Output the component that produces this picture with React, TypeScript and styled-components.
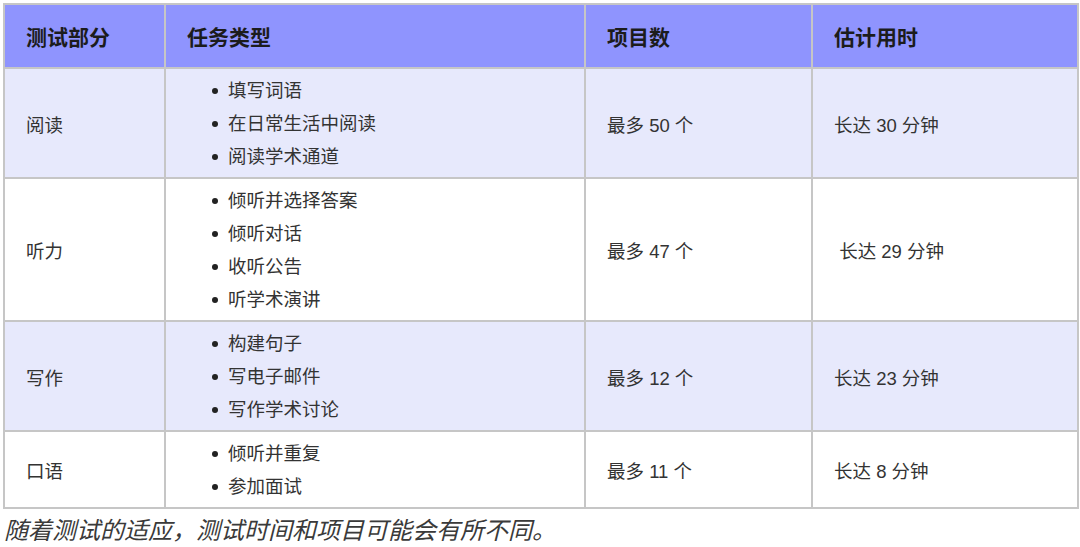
import { FC } from "react";
import styled, { createGlobalStyle } from "styled-components";

const GlobalStyle = createGlobalStyle`
    html, body {
        margin: 0;
        padding: 0;
        background: #ffffff;
    }
    body {
        font-family: "Liberation Sans", "Noto Sans CJK SC", sans-serif;
        color: #333333;
    }
`;

const sections = [
    { part: "阅读", tasks: ["填写词语", "在日常生活中阅读", "阅读学术通道"], items: "最多 50 个", time: "长达 30 分钟" },
    { part: "听力", tasks: ["倾听并选择答案", "倾听对话", "收听公告", "听学术演讲"], items: "最多 47 个", time: "\u00a0长达 29 分钟" },
    { part: "写作", tasks: ["构建句子", "写电子邮件", "写作学术讨论"], items: "最多 12 个", time: "长达 23 分钟" },
    { part: "口语", tasks: ["倾听并重复", "参加面试"], items: "最多 11 个", time: "长达 8 分钟" },
];

const Page = styled.div`
    padding: 3px 3px 0 3px;
`;

const Table = styled.table`
    width: 1074px;
    border-collapse: collapse;
    table-layout: fixed;
    border: 2px solid #c6c6c6;
`;

const HeadCell = styled.th<{ $w: number }>`
    box-sizing: border-box;
    width: ${(p) => p.$w}px;
    height: 64px;
    padding: 0 0 0 21px;
    text-align: left;
    font-size: 21px;
    font-weight: 700;
    color: #1c1c1c;
    background: #8f94fe;
    border: 2px solid #c6c6c6;
`;

const Row = styled.tr<{ $shaded: boolean }>`
    background: ${(p) => (p.$shaded ? "#e7e9fc" : "#ffffff")};
`;

const Cell = styled.td`
    padding: 5px 0 4px 21px;
    vertical-align: middle;
    font-size: 18.5px;
    color: #333333;
    border: 2px solid #c6c6c6;
    white-space: pre;
`;

const TaskList = styled.ul`
    list-style: none;
    margin: 0;
    padding: 0 0 0 22px;
`;

const Task = styled.li`
    position: relative;
    height: 33px;
    line-height: 33px;
    padding-left: 19px;

    &::before {
        content: "";
        position: absolute;
        left: 3px;
        top: 14px;
        width: 6px;
        height: 6px;
        border-radius: 50%;
        background: #222222;
    }
`;

const Caption = styled.p`
    margin: 6px 0 0 1px;
    font-size: 24px;
    font-style: italic;
    color: #3a3a3a;
    line-height: 32px;
`;

const App: FC = () => {
    return (
        <Page>
            <GlobalStyle />
            <Table>
                <thead>
                    <tr>
                        <HeadCell $w={161}>测试部分</HeadCell>
                        <HeadCell $w={420}>任务类型</HeadCell>
                        <HeadCell $w={227}>项目数</HeadCell>
                        <HeadCell $w={266}>估计用时</HeadCell>
                    </tr>
                </thead>
                <tbody>
                    {sections.map((s, i) => (
                        <Row key={s.part} $shaded={i % 2 === 0}>
                            <Cell>{s.part}</Cell>
                            <Cell>
                                <TaskList>
                                    {s.tasks.map((t) => (
                                        <Task key={t}>{t}</Task>
                                    ))}
                                </TaskList>
                            </Cell>
                            <Cell>{s.items}</Cell>
                            <Cell>{s.time}</Cell>
                        </Row>
                    ))}
                </tbody>
            </Table>
            <Caption>随着测试的适应，测试时间和项目可能会有所不同。</Caption>
        </Page>
    );
};

export default App;
